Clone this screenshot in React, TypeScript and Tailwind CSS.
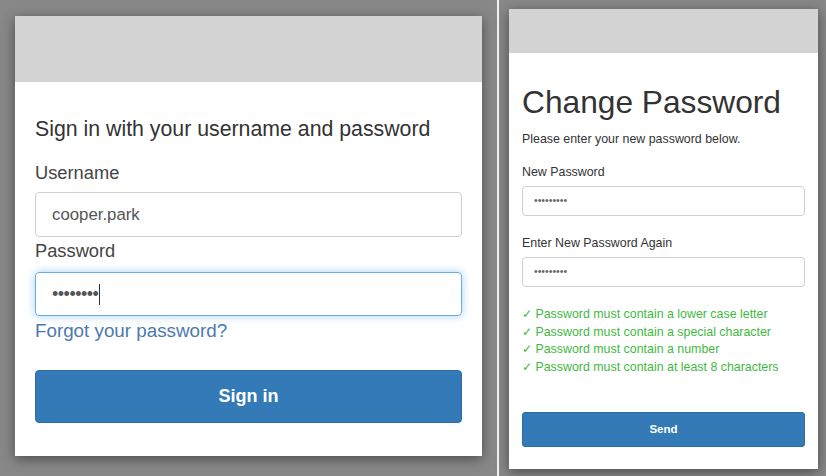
const rules = [
  "Password must contain a lower case letter",
  "Password must contain a special character",
  "Password must contain a number",
  "Password must contain at least 8 characters",
];

function SignInPanel() {
  return (
    <div className="flex h-[440px] w-[467px] flex-col bg-white shadow-[0_3px_12px_rgba(0,0,0,0.45)]">
      <div className="h-[66px] bg-[#d3d3d3]" />
      <div className="flex flex-col px-[20px] pb-[33px]">
        <h1 className="mt-[36px] text-[21.3px] leading-[22px] text-[#333]">
          Sign in with your username and password
        </h1>
        <label className="mt-[23px] text-[18.3px] leading-[20px] text-[#444]">Username</label>
        <div className="mt-[9px] flex h-[45px] items-center rounded-[4px] border border-[#cfcfcf] pl-[16px] text-[16.8px] text-[#555]">
          cooper.park
        </div>
        <label className="mt-[4px] text-[18.3px] leading-[20px] text-[#444]">Password</label>
        <div className="mt-[11px] flex h-[44px] items-center rounded-[4px] border border-[#66afe9] pl-[16px] text-[18px] text-[#555] shadow-[0_0_8px_rgba(102,175,233,0.6)]">
          <span className="tracking-[-0.5px]">••••••••</span>
          <span className="ml-[1px] h-[21px] w-px bg-[#333]" />
        </div>
        <a className="mt-[5px] text-[18.8px] leading-[20px] text-[#4a7aad]">Forgot your password?</a>
        <button className="mt-[29px] h-[53px] rounded-[4px] border border-[#2e6da4] bg-[#337ab7] text-[18px] font-bold text-white">
          Sign in
        </button>
      </div>
    </div>
  );
}

function ChangePasswordPanel() {
  return (
    <div className="flex h-[460px] w-[309px] flex-col bg-white shadow-[0_3px_12px_rgba(0,0,0,0.45)]">
      <div className="h-[44px] bg-[#d3d3d3]" />
      <div className="flex flex-col px-[13px] pb-[22px]">
        <h1 className="mt-[32px] text-[31.7px] leading-[35px] text-[#333]">Change Password</h1>
        <p className="mt-[11px] text-[12.4px] leading-[16px] text-[#333]">
          Please enter your new password below.
        </p>
        <label className="mt-[17px] text-[12.4px] leading-[16px] text-[#333]">New Password</label>
        <div className="mt-[6px] flex h-[30px] items-center rounded-[4px] border border-[#cfcfcf] pl-[11px] text-[10.5px] text-[#666]">
          •••••••••
        </div>
        <label className="mt-[19px] text-[12.4px] leading-[16px] text-[#333]">
          Enter New Password Again
        </label>
        <div className="mt-[6px] flex h-[30px] items-center rounded-[4px] border border-[#cfcfcf] pl-[11px] text-[10.5px] text-[#666]">
          •••••••••
        </div>
        <ul className="mt-[19px] text-[12.4px] leading-[17.7px] text-[#3fb93f]">
          {rules.map((r) => (
            <li key={r}>✓ {r}</li>
          ))}
        </ul>
        <button className="mt-[35px] h-[35px] rounded-[3px] border border-[#2e6da4] bg-[#337ab7] text-[11.5px] font-bold text-white">
          Send
        </button>
      </div>
    </div>
  );
}

export default function App() {
  return (
    <div className="flex h-[476px] w-[826px] bg-[#888888] font-['Liberation_Sans',Arial,sans-serif]">
      <div className="w-[497px] pl-[15px] pt-[16px]">
        <SignInPanel />
      </div>
      <div className="w-[2px] bg-[#f2f2f2]" />
      <div className="flex-1 pl-[10px] pt-[9px]">
        <ChangePasswordPanel />
      </div>
    </div>
  );
}
